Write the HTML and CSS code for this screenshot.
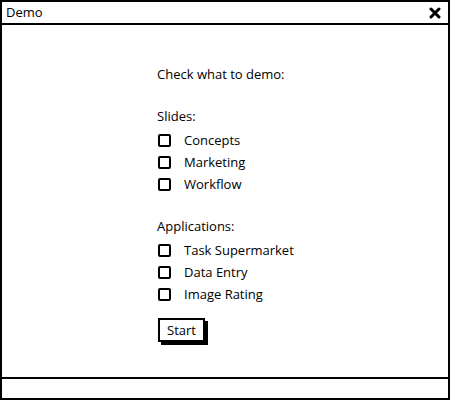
FILE: index.html
```html
<!DOCTYPE html>
<html>
<head>
<meta charset="utf-8">
<link rel="stylesheet" href="styles.css">
</head>
<body>
<div class="window">
  <div class="titlebar">
    <span class="title">Demo</span>
    <svg class="close" width="12" height="12" viewBox="0 0 12 12"><path d="M2 2 L10 10 M10 2 L2 10" stroke="#000" stroke-width="3" stroke-linecap="round"/></svg>
  </div>
  <div class="content">
    <div class="form">
      <div class="heading">Check what to demo:</div>
      <div class="section">
        <div class="label">Slides:</div>
        <div class="item"><span class="box"></span>Concepts</div>
        <div class="item"><span class="box"></span>Marketing</div>
        <div class="item"><span class="box"></span>Workflow</div>
      </div>
      <div class="section">
        <div class="label">Applications:</div>
        <div class="item"><span class="box"></span>Task Supermarket</div>
        <div class="item"><span class="box"></span>Data Entry</div>
        <div class="item"><span class="box"></span>Image Rating</div>
      </div>
      <div class="btnrow"><span class="btn">Start</span></div>
    </div>
  </div>
  <div class="status"></div>
</div>
</body>
</html>
```

FILE: styles.css
```css
* { box-sizing: border-box; }
html, body { margin: 0; padding: 0; background: #fff; }
body { font-family: "Open Sans", "DejaVu Sans", sans-serif; font-size: 13px; color: #000; }
.window {
  width: 450px; height: 400px;
  border: 2px solid #000;
  display: flex; flex-direction: column;
}
.titlebar {
  height: 23px;
  border-bottom: 2px solid #000;
  display: flex; align-items: center; justify-content: space-between;
  padding: 0 7px 0 4px;
}
.title { font-size: 13px; line-height: 1; }
.close { display: block; }
.content { flex: 1; padding: 40px 0 0 155px; }
.form { display: flex; flex-direction: column; }
.heading { line-height: 18px; }
.section { margin-top: 24px; display: flex; flex-direction: column; }
.label { line-height: 18px; margin-bottom: 4px; }
.item { display: flex; align-items: center; height: 22px; }
.box {
  width: 13px; height: 13px;
  border: 2px solid #000; border-radius: 2px;
  margin: 0 13px 0 1px;
}
.section + .section { margin-top: 22px; }
.btnrow { margin-top: 13px; padding-left: 1px; }
.btn {
  display: inline-block;
  border: 2px solid #000;
  box-shadow: 3px 3px 0 #000;
  padding: 1px 7px;
  line-height: 18px;
}
.status { height: 21px; border-top: 2px solid #000; }
```
